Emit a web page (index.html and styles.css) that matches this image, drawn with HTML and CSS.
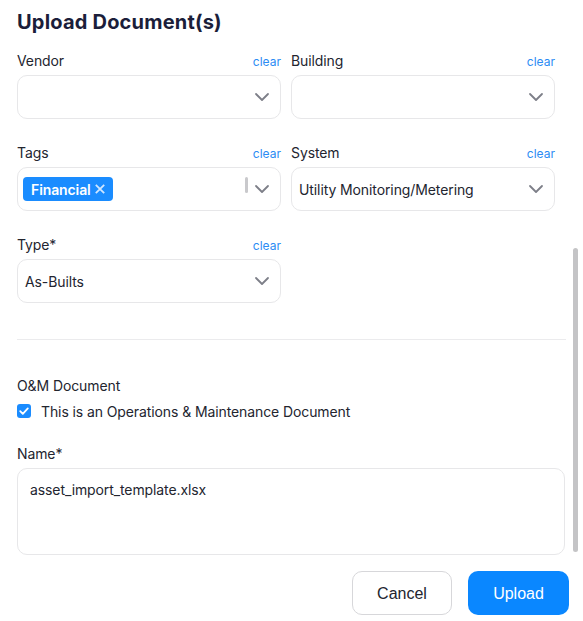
FILE: index.html
```html
<!DOCTYPE html>
<html>
<head>
<meta charset="utf-8">
<link rel="stylesheet" href="styles.css">
</head>
<body>
<div class="dialog">
  <div class="scroll">
    <div class="content">
      <h1 class="title">Upload Document(s)</h1>
      <div class="grid">
        <div class="field">
          <div class="label-row"><span class="label">Vendor</span><a class="clear">clear</a></div>
          <div class="select"><div class="value"></div><svg class="chev" viewBox="0 0 16 10"><path d="M2 2l6 6 6-6"/></svg></div>
        </div>
        <div class="field">
          <div class="label-row"><span class="label">Building</span><a class="clear">clear</a></div>
          <div class="select"><div class="value"></div><svg class="chev" viewBox="0 0 16 10"><path d="M2 2l6 6 6-6"/></svg></div>
        </div>
        <div class="field">
          <div class="label-row"><span class="label">Tags</span><a class="clear">clear</a></div>
          <div class="select tags">
            <div class="value"><span class="chip">Financial<svg class="x" viewBox="0 0 10 10"><path d="M1.5 1.5l7 7M8.5 1.5l-7 7"/></svg></span></div>
            <span class="mini-bar"></span>
            <svg class="chev" viewBox="0 0 16 10"><path d="M2 2l6 6 6-6"/></svg>
          </div>
        </div>
        <div class="field">
          <div class="label-row"><span class="label">System</span><a class="clear">clear</a></div>
          <div class="select"><div class="value">Utility Monitoring/Metering</div><svg class="chev" viewBox="0 0 16 10"><path d="M2 2l6 6 6-6"/></svg></div>
        </div>
        <div class="field">
          <div class="label-row"><span class="label">Type*</span><a class="clear">clear</a></div>
          <div class="select"><div class="value">As-Builts</div><svg class="chev" viewBox="0 0 16 10"><path d="M2 2l6 6 6-6"/></svg></div>
        </div>
      </div>
      <hr class="divider">
      <div class="om">
        <div class="label">O&amp;M Document</div>
        <label class="check-row"><span class="checkbox"><svg viewBox="0 0 14 14"><path d="M3.2 7.2l2.6 2.6 5-5.4"/></svg></span>This is an Operations &amp; Maintenance Document</label>
      </div>
      <div class="name-field">
        <div class="label">Name*</div>
        <div class="textarea">asset_import_template.xlsx</div>
      </div>
    </div>
    <div class="thumb"></div>
  </div>
  <div class="footer">
    <button class="btn cancel">Cancel</button>
    <button class="btn upload">Upload</button>
  </div>
</div>
</body>
</html>
```

FILE: styles.css
```css
* { box-sizing: border-box; }
html, body { margin: 0; padding: 0; background: #fff; }
body {
  font-family: Inter, "Noto Sans", sans-serif;
  color: #23252f;
  font-size: 14px;
  letter-spacing: -0.1px;
  width: 583px;
  height: 621px;
  overflow: hidden;
}
.dialog { display: flex; flex-direction: column; height: 621px; }
.scroll {
  position: relative;
  height: 561px;
  width: 581px;
  overflow: hidden;
}
.content { padding: 8px 16px 0 17px; }
.title {
  margin: 0 0 15px;
  font-size: 20px;
  line-height: 28px;
  font-weight: 700;
  color: #1b1e3a;
  letter-spacing: 0.2px;
}
.grid {
  display: grid;
  grid-template-columns: 264px 264px;
  column-gap: 10px;
  row-gap: 24px;
}
.label-row {
  display: flex;
  justify-content: space-between;
  align-items: center;
  height: 20px;
  margin-bottom: 4px;
}
.label { font-size: 14px; line-height: 20px; color: #23252f; }
.clear { font-size: 12px; color: #2c8cf4; cursor: pointer; letter-spacing: 0; }
.select {
  display: flex;
  align-items: center;
  height: 44px;
  border: 1px solid #e7e7e9;
  border-radius: 10px;
  padding: 0 10px 0 7px;
}
.select .value { flex: 1; font-size: 14px; color: #23252f; }
.chev {
  width: 16px;
  height: 10px;
  fill: none;
  stroke: #7d7f88;
  stroke-width: 1.8;
  stroke-linecap: round;
  stroke-linejoin: round;
}
.tags { padding-left: 5px; }
.chip {
  display: inline-flex;
  align-items: center;
  gap: 3px;
  height: 24px;
  padding: 0 7px 0 8px;
  background: #1a8cff;
  color: #fff;
  border-radius: 4px;
  font-weight: 600;
  font-size: 14px;
}
.chip .x {
  width: 12px;
  height: 12px;
  fill: none;
  stroke: #cfe6ff;
  stroke-width: 1.5;
}
.mini-bar {
  width: 3px;
  height: 16px;
  border-radius: 2px;
  background: #c9c9cc;
  margin: -8px 6px 0 0;
}
.divider {
  border: 0;
  border-top: 1px solid #ebebed;
  margin: 36px 0 0;
  width: 549px;
}
.om { margin-top: 36px; }
.check-row {
  display: flex;
  align-items: center;
  gap: 10px;
  height: 20px;
  margin-top: 5px;
  font-size: 14px;
  color: #23252f;
}
.checkbox {
  width: 14px;
  height: 14px;
  border-radius: 3px;
  background: #1a8cff;
  display: inline-flex;
  margin-top: -1px;
}
.checkbox svg {
  width: 14px;
  height: 14px;
  fill: none;
  stroke: #fff;
  stroke-width: 1.8;
  stroke-linecap: round;
  stroke-linejoin: round;
}
.name-field { margin-top: 23px; }
.name-field .label { margin-bottom: 4px; }
.textarea {
  width: 548px;
  height: 87px;
  border: 1px solid #e7e7e9;
  border-radius: 10px;
  padding: 11px 12px;
  font-size: 14px;
  line-height: 20px;
  color: #23252f;
}
.thumb {
  position: absolute;
  left: 573px;
  top: 248px;
  width: 5px;
  height: 304px;
  border-radius: 3px;
  background: #c4c4c6;
}
.footer {
  display: flex;
  justify-content: flex-end;
  gap: 16px;
  padding: 10px 14px 0 0;
}
.btn {
  height: 44px;
  border-radius: 10px;
  font-family: "Liberation Sans", Arial, sans-serif;
  font-size: 16px;
  letter-spacing: 0;
  cursor: pointer;
  padding-top: 2px;
}
.cancel {
  width: 100px;
  background: #fff;
  border: 1px solid #d7d7da;
  color: #22242e;
}
.upload {
  width: 101px;
  background: #0a87ff;
  border: 0;
  color: #fff;
}
```
